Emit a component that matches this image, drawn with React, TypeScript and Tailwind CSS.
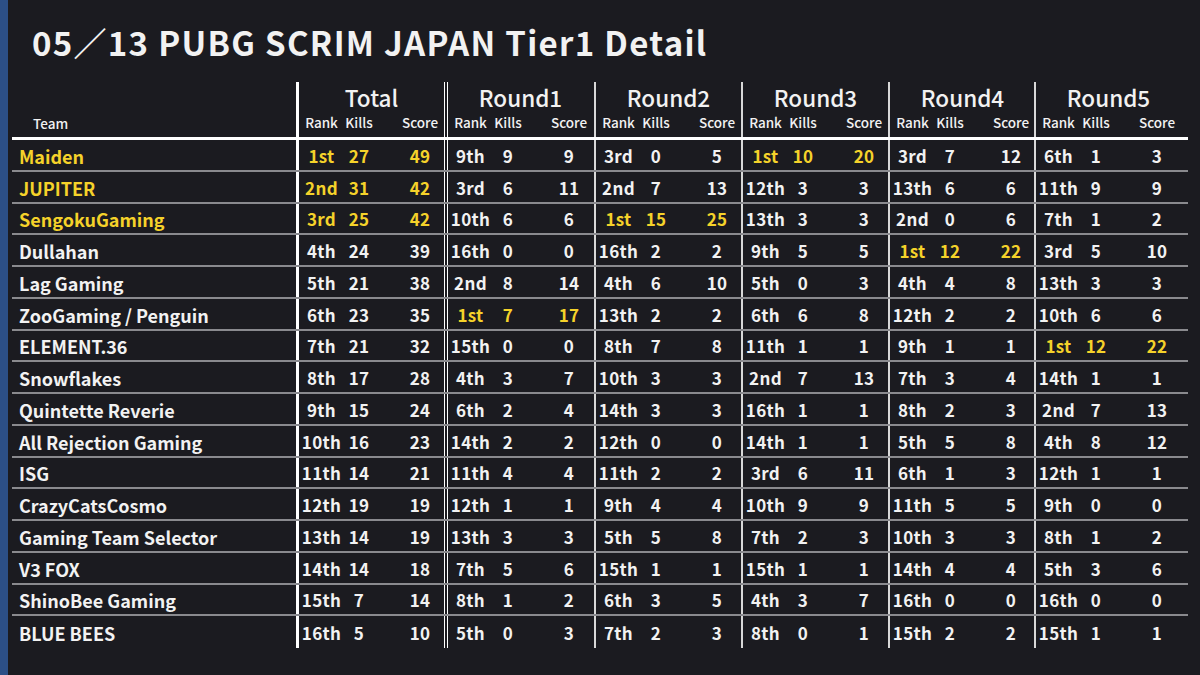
import React from 'react'

type Cell = [string, number, number]
type Row = { team: string; top: boolean; total: Cell; rounds: Cell[] }

const ROWS: Row[] = [
  { team: 'Maiden', top: true, total: ['1st', 27, 49], rounds: [['9th', 9, 9], ['3rd', 0, 5], ['1st', 10, 20], ['3rd', 7, 12], ['6th', 1, 3]] },
  { team: 'JUPITER', top: true, total: ['2nd', 31, 42], rounds: [['3rd', 6, 11], ['2nd', 7, 13], ['12th', 3, 3], ['13th', 6, 6], ['11th', 9, 9]] },
  { team: 'SengokuGaming', top: true, total: ['3rd', 25, 42], rounds: [['10th', 6, 6], ['1st', 15, 25], ['13th', 3, 3], ['2nd', 0, 6], ['7th', 1, 2]] },
  { team: 'Dullahan', top: false, total: ['4th', 24, 39], rounds: [['16th', 0, 0], ['16th', 2, 2], ['9th', 5, 5], ['1st', 12, 22], ['3rd', 5, 10]] },
  { team: 'Lag Gaming', top: false, total: ['5th', 21, 38], rounds: [['2nd', 8, 14], ['4th', 6, 10], ['5th', 0, 3], ['4th', 4, 8], ['13th', 3, 3]] },
  { team: 'ZooGaming / Penguin', top: false, total: ['6th', 23, 35], rounds: [['1st', 7, 17], ['13th', 2, 2], ['6th', 6, 8], ['12th', 2, 2], ['10th', 6, 6]] },
  { team: 'ELEMENT.36', top: false, total: ['7th', 21, 32], rounds: [['15th', 0, 0], ['8th', 7, 8], ['11th', 1, 1], ['9th', 1, 1], ['1st', 12, 22]] },
  { team: 'Snowflakes', top: false, total: ['8th', 17, 28], rounds: [['4th', 3, 7], ['10th', 3, 3], ['2nd', 7, 13], ['7th', 3, 4], ['14th', 1, 1]] },
  { team: 'Quintette Reverie', top: false, total: ['9th', 15, 24], rounds: [['6th', 2, 4], ['14th', 3, 3], ['16th', 1, 1], ['8th', 2, 3], ['2nd', 7, 13]] },
  { team: 'All Rejection Gaming', top: false, total: ['10th', 16, 23], rounds: [['14th', 2, 2], ['12th', 0, 0], ['14th', 1, 1], ['5th', 5, 8], ['4th', 8, 12]] },
  { team: 'ISG', top: false, total: ['11th', 14, 21], rounds: [['11th', 4, 4], ['11th', 2, 2], ['3rd', 6, 11], ['6th', 1, 3], ['12th', 1, 1]] },
  { team: 'CrazyCatsCosmo', top: false, total: ['12th', 19, 19], rounds: [['12th', 1, 1], ['9th', 4, 4], ['10th', 9, 9], ['11th', 5, 5], ['9th', 0, 0]] },
  { team: 'Gaming Team Selector', top: false, total: ['13th', 14, 19], rounds: [['13th', 3, 3], ['5th', 5, 8], ['7th', 2, 3], ['10th', 3, 3], ['8th', 1, 2]] },
  { team: 'V3 FOX', top: false, total: ['14th', 14, 18], rounds: [['7th', 5, 6], ['15th', 1, 1], ['15th', 1, 1], ['14th', 4, 4], ['5th', 3, 6]] },
  { team: 'ShinoBee Gaming', top: false, total: ['15th', 7, 14], rounds: [['8th', 1, 2], ['6th', 3, 5], ['4th', 3, 7], ['16th', 0, 0], ['16th', 0, 0]] },
  { team: 'BLUE BEES', top: false, total: ['16th', 5, 10], rounds: [['5th', 0, 3], ['7th', 2, 3], ['8th', 0, 1], ['15th', 2, 2], ['15th', 1, 1]] },
]

// widths + left borders for Total, Round1..Round5
const GROUPS = [
  { title: 'Total', cls: 'w-[148px] border-l-[3px] border-white' },
  { title: 'Round1', cls: 'w-[150px] border-l-4 border-double border-white' },
  { title: 'Round2', cls: 'w-[147px] border-l-2 border-[#d8d8d8]' },
  { title: 'Round3', cls: 'w-[147px] border-l-2 border-[#d8d8d8]' },
  { title: 'Round4', cls: 'w-[146px] border-l-2 border-[#d8d8d8]' },
  { title: 'Round5', cls: 'w-[154px] border-l-2 border-[#d8d8d8]' },
]

function Triple({ a, b, c, className }: { a: React.ReactNode; b: React.ReactNode; c: React.ReactNode; className?: string }) {
  return (
    <div className={`flex items-center ${className ?? ''}`}>
      <span className="w-[45px] shrink-0 text-center">{a}</span>
      <span className="w-[30px] shrink-0 text-center">{b}</span>
      <span className="w-[22px] shrink-0" />
      <span className="w-[48px] shrink-0 text-center">{c}</span>
    </div>
  )
}

export default function App() {
  return (
    <div
      className="flex h-[675px] w-[1200px] overflow-hidden bg-[#1b1b20] text-[#f2f2f2]"
      style={{ fontFamily: '"Noto Sans CJK JP", "Noto Sans", sans-serif' }}
    >
      <div className="w-2 shrink-0 bg-[#2c4f86]" />
      <div className="flex flex-col pl-1">
        <h1 className="pl-5 pt-[20px] text-[33px] font-bold leading-[44px] tracking-[1.3px]">
          05／13 PUBG SCRIM JAPAN Tier1 Detail
        </h1>

        <div className="mt-[18px] w-[1176px]">
          <div className="flex h-[58px] border-b-[3px] border-white">
            <div className="flex w-[284px] shrink-0 flex-col justify-end pb-[5px] pl-[21px] text-[13.5px] font-medium leading-[18px]">
              Team
            </div>
            {GROUPS.map(g => (
              <div key={g.title} className={`flex shrink-0 flex-col ${g.cls}`}>
                <div className="w-[145px] text-center text-[22.5px] font-medium leading-[30px]">{g.title}</div>
                <Triple className="mt-[1px] text-[13.5px] font-medium leading-[18px]" a="Rank" b="Kills" c="Score" />
              </div>
            ))}
          </div>

          {ROWS.map((r, i) => {
            const last = i === ROWS.length - 1
            return (
              <div
                key={r.team}
                className={`flex h-[31.75px] text-[18px] font-semibold leading-none ${last ? '' : 'border-b-2 border-[#8a8a8e]'}`}
              >
                <div className={`flex w-[284px] shrink-0 items-center pl-[7px] pt-[2px] ${r.top ? 'text-[#f5d22a]' : ''}`}>
                  {r.team}
                </div>
                {[r.total, ...r.rounds].map((c, j) => {
                  const yellow = j === 0 ? r.top : c[0] === '1st'
                  return (
                    <div key={j} className={`flex shrink-0 items-center ${GROUPS[j].cls}`}>
                      <Triple
                        className={`pt-[1px] text-[17px] tracking-[0.3px] ${yellow ? 'text-[#f5d22a]' : ''}`}
                        a={c[0]}
                        b={c[1]}
                        c={c[2]}
                      />
                    </div>
                  )
                })}
              </div>
            )
          })}
        </div>
      </div>
    </div>
  )
}
